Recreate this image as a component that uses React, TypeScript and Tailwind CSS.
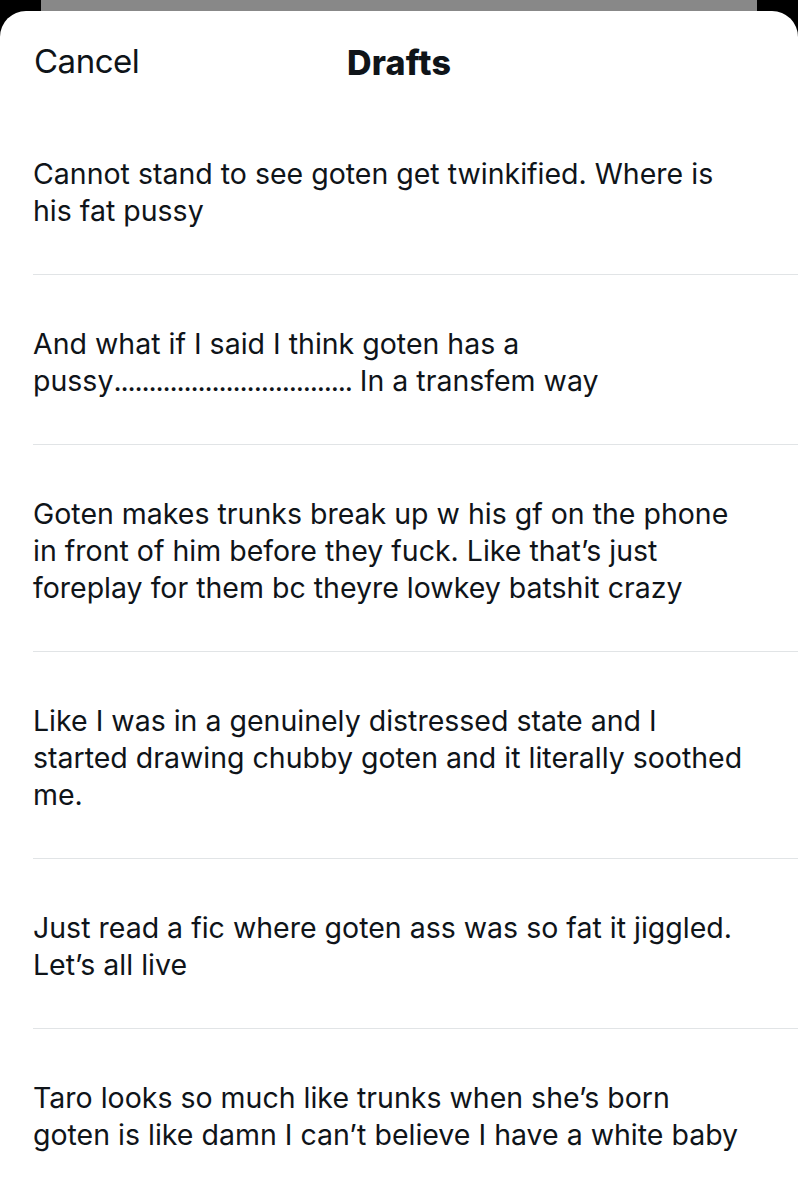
const drafts: React.ReactNode[][] = [
  ['Cannot stand to see goten get twinkified. Where is', 'his fat pussy'],
  [
    'And what if I said I think goten has a',
    <>
      pussy<span className="tracking-[-1.2px]">..................................</span> In a transfem way
    </>,
  ],
  [
    'Goten makes trunks break up w his gf on the phone',
    'in front of him before they fuck. Like that\u2019s just',
    'foreplay for them bc theyre lowkey batshit crazy',
  ],
  [
    'Like I was in a genuinely distressed state and I',
    'started drawing chubby goten and it literally soothed',
    'me.',
  ],
  ['Just read a fic where goten ass was so fat it jiggled.', 'Let\u2019s all live'],
  [
    'Taro looks so much like trunks when she\u2019s born',
    'goten is like damn I can\u2019t believe I have a white baby',
  ],
];

export default function App() {
  return (
    <div className="w-[798px] h-[1200px] overflow-hidden bg-black font-['Inter',sans-serif] text-[#0f1419]">
      {/* sheet behind */}
      <div className="mx-[41px] h-[12px] bg-[#888888]" />

      <div className="-mt-[1px] h-[1189px] rounded-t-[26px] bg-white">
        {/* Header */}
        <div className="relative flex h-[94px] items-center px-[34px] pt-[8px]">
          <span className="text-[33px] tracking-[-0.5px]">Cancel</span>
          <span className="absolute left-1/2 -translate-x-1/2 text-[34px] font-extrabold tracking-[0.2px]">
            Drafts
          </span>
        </div>

        {/* Draft list */}
        <div className="pl-[33px]">
          {drafts.map((lines, i) => (
            <div
              key={i}
              className={`pt-[50px] pb-[45px] pr-[20px] ${i < drafts.length - 1 ? 'border-b border-[#e1e4e6]' : ''}`}
            >
              {lines.map((line, j) => (
                <div key={j} className="h-[37px] text-[28.5px] leading-[37px] whitespace-nowrap">
                  {line}
                </div>
              ))}
            </div>
          ))}
        </div>
      </div>
    </div>
  );
}
